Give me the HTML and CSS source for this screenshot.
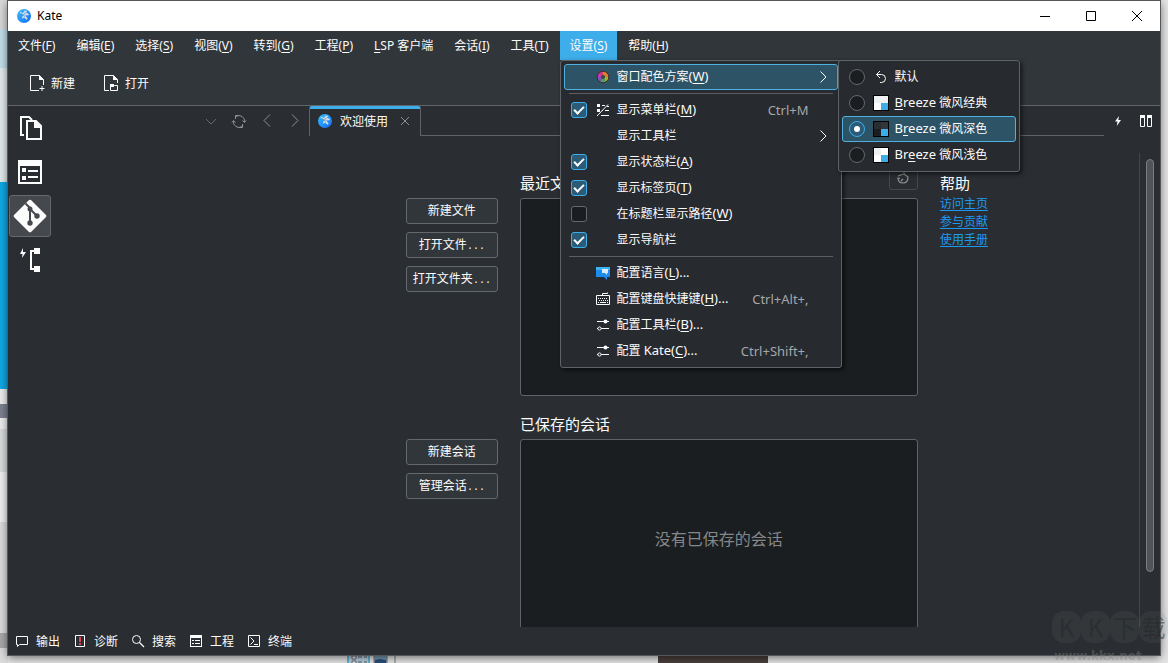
FILE: index.html
```html
<!DOCTYPE html>
<html lang="zh-CN">
<head>
<meta charset="utf-8">
<title>Kate</title>
<link rel="stylesheet" href="styles.css">
</head>
<body>
<svg class="defs" width="0" height="0" aria-hidden="true">
  <defs>
    <linearGradient id="kate-blue" x1="0" y1="0" x2="1" y2="1"><stop offset="0" stop-color="#35c3ff"/><stop offset="1" stop-color="#1467f5"/></linearGradient>
    <symbol id="kate" viewBox="0 0 16 16">
      <circle cx="8" cy="8" r="7" fill="url(#kate-blue)"/>
      <path d="M3.500 3.500l3.500 1.500 1.500-2.500 3 .3-1.500 1.700 3 1.500-.5 1.200-3.500.3 2.500 2.500-.5 2-3-2.500-1.500 1.500-.5-2 1.500-2-3.500-2z" fill="#cddbe8"/>
      <path d="M5 5.500l4 3M9.500 4.500L7.500 7" stroke="#6b93b5" stroke-width=".8" fill="none"/>
    </symbol>
    <symbol id="arrow" viewBox="0 0 16 16"><path d="M5.500 2.500L11 8l-5.500 5.500" fill="none" stroke="currentColor"/></symbol>
    <symbol id="sliders" viewBox="0 0 16 16"><path d="M2 4.500h12M6 11.500h8M2 11.500h1" fill="none" stroke="currentColor"/><circle cx="10.500" cy="4.500" r="2" fill="currentColor"/><circle cx="4.500" cy="11.500" r="1.600" fill="none" stroke="currentColor"/></symbol>
    <symbol id="bolt" viewBox="0 0 16 16"><path d="M9 3L5 8.500h2.500L6.800 13 11 7H8.300z" fill="currentColor"/></symbol>
  </defs>
</svg>

<div class="desk">
  <div class="desk-left" aria-hidden="true"></div>
  <div class="desk-bottom" aria-hidden="true">
    <svg width="50" height="12" viewBox="0 0 50 12"><path d="M1 0v12M22 0v12" stroke="#36a3cd" stroke-width="1.500"/><path d="M2 0h19v12H2z" fill="#b7cfdc"/><path d="M5 1h4v3H5zM5 6h4v3H5z" fill="#eee" stroke="#667"/><path d="M11 2h4m2 0h3M11 7h4m2 0h3" stroke="#555b60"/><path d="M27 0h13v8H27z" fill="#7697b4" stroke="#777"/><path d="M28 5l5-1 6 1v3H28z" fill="#264f79"/><path d="M48 0v12" stroke="#777"/></svg>
    <span class="desk-dark"></span>
  </div>

  <div class="window">
    <header class="titlebar">
      <svg class="icon" aria-hidden="true"><use href="#kate"/></svg>
      <span class="title">Kate</span>
      <button class="wc" aria-label="最小化"><svg width="12" height="12"><path d="M1 6.500h10" stroke="#000"/></svg></button>
      <button class="wc" aria-label="最大化"><svg width="12" height="12"><path d="M1.500 1.500h9v9h-9z" stroke="#000" fill="none"/></svg></button>
      <button class="wc" aria-label="关闭"><svg width="12" height="12"><path d="M1 1l10 10M11 1L1 11" stroke="#000"/></svg></button>
    </header>

    <nav class="menubar">
      <button class="menu">文件(<u>F</u>)</button>
      <button class="menu">编辑(<u>E</u>)</button>
      <button class="menu">选择(<u>S</u>)</button>
      <button class="menu">视图(<u>V</u>)</button>
      <button class="menu">转到(<u>G</u>)</button>
      <button class="menu">工程(<u>P</u>)</button>
      <button class="menu"><u>L</u>SP 客户端</button>
      <button class="menu">会话(<u>I</u>)</button>
      <button class="menu">工具(<u>T</u>)</button>
      <div class="menu-host">
        <button class="menu menu-open" aria-expanded="true">设置(<u>S</u>)</button>
        <div class="popup popup-settings">
          <div class="sub-host">
            <button class="item item-active">
              <svg class="icon c-icon" viewBox="0 0 16 16" aria-hidden="true"><g fill="none" stroke-width="4"><path d="M8 4a4 4 0 0 1 4 4" stroke="#d9822b"/><path d="M12 8a4 4 0 0 1-2 3.460" stroke="#9bb52e"/><path d="M10 11.460a4 4 0 0 1-4 0" stroke="#4f9e6b"/><path d="M6 11.460A4 4 0 0 1 4 8" stroke="#7f55b5"/><path d="M4 8a4 4 0 0 1 2-3.460" stroke="#c938a8"/><path d="M6 4.540A4 4 0 0 1 8 4" stroke="#e2336b"/></g><circle cx="8" cy="8" r="1.800" fill="#444"/><circle cx="8" cy="8" r="5.800" fill="none" stroke="#3b2b33"/></svg>
              <span class="c-text">窗口配色方案<span class="la">(<u>W</u>)</span></span>
              <svg class="icon c-arrow" aria-hidden="true"><use href="#arrow"/></svg>
            </button>
            <div class="popup popup-scheme">
              <label class="item"><input type="radio" name="scheme">
                <svg class="icon c-icon" viewBox="0 0 16 16"><path d="M3.500 5.500h5a3.800 3.800 0 0 1 0 8H7M7 2L3.500 5.500 7 9" fill="none" stroke="currentColor"/></svg>
                <span class="c-text">默认</span></label>
              <label class="item"><input type="radio" name="scheme">
                <svg class="icon c-icon" viewBox="0 0 16 16"><path d="M0 0h16v16H0z" fill="#000"/><path d="M1 1h14v7H1z" fill="#eff0f1"/><path d="M1 8h7v7H1z" fill="#fff"/><path d="M8 8h7v7H8z" fill="#3daee9"/></svg>
                <span class="c-text"><span class="la"><u>B</u>reeze</span> 微风经典</span></label>
              <label class="item item-active"><input type="radio" name="scheme" checked>
                <svg class="icon c-icon" viewBox="0 0 16 16"><path d="M0 0h16v16H0z" fill="#000"/><path d="M1 1h7v7H1z" fill="#2a2e32"/><path d="M8 1h7v7H8z" fill="#31363b"/><path d="M1 8h7v7H1z" fill="#1b1e20"/><path d="M8 8h7v7H8z" fill="#3daee9"/></svg>
                <span class="c-text"><span class="la">B<u>r</u>eeze</span> 微风深色</span></label>
              <label class="item"><input type="radio" name="scheme">
                <svg class="icon c-icon" viewBox="0 0 16 16"><path d="M0 0h16v16H0z" fill="#000"/><path d="M1 1h7v7H1z" fill="#eff0f1"/><path d="M8 1h7v7H8zM1 8h7v7H1z" fill="#fff"/><path d="M8 8h7v7H8z" fill="#3daee9"/></svg>
                <span class="c-text"><span class="la">Br<u>e</u>eze</span> 微风浅色</span></label>
            </div>
          </div>
          <hr class="sep">
          <label class="item"><input type="checkbox" checked>
            <svg class="icon c-icon" viewBox="0 0 16 16"><path d="M2 2h3v3H2zM2 7h3v3H2z" fill="currentColor"/><path d="M7 3.500h3M7 8.500h1M10 8.500h4M2 13.500h1M6 13.500h8M12 4.500h2M2.500 13.500L13 2.500" fill="none" stroke="currentColor"/></svg>
            <span class="c-text">显示菜单栏<span class="la">(<u>M</u>)</span></span><kbd class="key">Ctrl+M</kbd></label>
          <button class="item"><span class="c-text">显示工具栏</span><svg class="icon c-arrow" aria-hidden="true"><use href="#arrow"/></svg></button>
          <label class="item"><input type="checkbox" checked><span class="c-text">显示状态栏<span class="la">(<u>A</u>)</span></span></label>
          <label class="item"><input type="checkbox" checked><span class="c-text">显示标签页<span class="la">(<u>T</u>)</span></span></label>
          <label class="item"><input type="checkbox"><span class="c-text">在标题栏显示路径<span class="la">(<u>W</u>)</span></span></label>
          <label class="item"><input type="checkbox" checked><span class="c-text">显示导航栏</span></label>
          <hr class="sep">
          <button class="item"><svg class="icon c-icon" viewBox="0 0 16 16"><path d="M1 2h14v10h-3v3l-3-3H1z" fill="#1d8cf0"/><path d="M1 2h14v3H1z" fill="#39b5f5"/><path d="M7 4h6v4h-1v2l-2-2H7z" fill="#d8ebfb"/></svg><span class="c-text">配置语言<span class="la">(<u>L</u>)...</span></span></button>
          <button class="item"><svg class="icon c-icon" viewBox="0 0 16 16"><path d="M1.500 4.500h13v9h-13zM7.500 4.500v-2h5v-1" fill="none" stroke="currentColor"/><path d="M3 7.500h10M4 9.500h9" stroke="currentColor" stroke-dasharray="1 1"/><path d="M3 11.500h1M5 11.500h6M12 11.500h1" stroke="currentColor"/></svg><span class="c-text">配置键盘快捷键<span class="la">(<u>H</u>)...</span></span><kbd class="key">Ctrl+Alt+,</kbd></button>
          <button class="item"><svg class="icon c-icon"><use href="#sliders"/></svg><span class="c-text">配置工具栏<span class="la">(<u>B</u>)...</span></span></button>
          <button class="item"><svg class="icon c-icon"><use href="#sliders"/></svg><span class="c-text">配置 <span class="la">Kate(<u>C</u>)...</span></span><kbd class="key">Ctrl+Shift+,</kbd></button>
        </div>
      </div>
      <button class="menu">帮助(<u>H</u>)</button>
    </nav>

    <div class="toolbar">
      <button class="tool"><svg class="icon" viewBox="0 0 16 16"><path d="M10 15.500H1.500v-15h9l4 4V10M10.500 13.500h5M13 11v5" fill="none" stroke="currentColor"/><path d="M10 0l5 5h-5z" fill="currentColor"/></svg><span>新建</span></button>
      <button class="tool"><svg class="icon" viewBox="0 0 16 16"><path d="M6 15.500H1.500v-15h9l4 4V8" fill="none" stroke="currentColor"/><path d="M10 0l5 5h-5z" fill="currentColor"/><path d="M7.500 9.500h3l1 1h3v5h-7z" fill="none" stroke="currentColor"/><path d="M7 9h4v3H7z" fill="currentColor"/></svg><span>打开</span></button>
    </div>

    <div class="body">
      <aside class="sidebar">
        <button class="side" aria-label="文档"><svg width="26" height="26" viewBox="0 0 26 26"><path d="M7 20H4V2h8l3 3" fill="none" stroke="currentColor" stroke-width="2"/><path d="M10 6h9l5 5v13H10z" fill="none" stroke="currentColor" stroke-width="2"/><path d="M17 5l8 8h-8z" fill="currentColor"/></svg></button>
        <button class="side" aria-label="工程"><svg width="26" height="26" viewBox="0 0 26 26"><path d="M1 1h24v24H1zM3 7v16h20V7z" fill="currentColor" fill-rule="evenodd"/><path d="M5 9h4v4H5zM5 17h4v4H5zM11 11h10v2H11zM11 17h10v2H11z" fill="currentColor"/></svg></button>
        <button class="side side-on" aria-label="Git"><svg width="34" height="34" viewBox="0 0 34 34"><path d="M15.500 1.500a2 2 0 0 1 3 0l14 14a2 2 0 0 1 0 3l-14 14a2 2 0 0 1-3 0l-14-14a2 2 0 0 1 0-3z" fill="#fcfcfc"/><path d="M12.500 4.500L17 9v15M17 10l7 7" fill="none" stroke="#45494d" stroke-width="2"/><g fill="#45494d"><circle cx="17" cy="10" r="2.500"/><circle cx="17" cy="24" r="2.700"/><circle cx="24" cy="17" r="2.700"/></g></svg></button>
        <button class="side" aria-label="LSP"><svg width="26" height="26" viewBox="0 0 26 26"><path d="M18 4h-4v18h4" fill="none" stroke="currentColor" stroke-width="2"/><path d="M17 1h6v6h-6zM17 19h6v6h-6zM6 1L3 7h2.500L5 11l4-6H6z" fill="currentColor"/></svg></button>
      </aside>

      <main class="main">
        <div class="tabs">
          <div class="nav">
            <button class="mini dim" aria-label="列表"><svg class="icon" viewBox="0 0 16 16"><path d="M3 6l5 5 5-5" fill="none" stroke="currentColor"/></svg></button>
            <button class="mini" aria-label="刷新"><svg class="icon" viewBox="0 0 16 16"><path d="M5 3.500A5.500 5.500 0 0 1 13.500 9M11 13.500A5.500 5.500 0 0 1 2.500 8M8 2.500H4.500V6M8 14.500h3.500V11M1 9.500l1.500-2 2 2M11.500 7.500l2 2 1.500-2" fill="none" stroke="currentColor"/></svg></button>
            <button class="mini" aria-label="后退"><svg class="icon" viewBox="0 0 16 16"><path d="M11 1.500L5 7.500l6 6" fill="none" stroke="currentColor"/></svg></button>
            <button class="mini" aria-label="前进"><svg class="icon" viewBox="0 0 16 16"><path d="M5 1.500l6 6-6 6" fill="none" stroke="currentColor"/></svg></button>
          </div>
          <div class="tab">
            <svg class="icon" aria-hidden="true"><use href="#kate"/></svg>
            <span>欢迎使用</span>
            <button class="mini" aria-label="关闭标签页"><svg width="10" height="10"><path d="M1 1l8 8M9 1L1 9" stroke="currentColor"/></svg></button>
          </div>
          <div class="tab-line"></div>
          <div class="tab-tools">
            <button class="mini bright" aria-label="快速打开"><svg class="icon"><use href="#bolt"/></svg></button>
            <button class="mini bright" aria-label="分割视图"><svg class="icon" viewBox="0 0 16 16"><path d="M2 2h5v3H2zM9 2h5v3H9z" fill="currentColor"/><path d="M2.500 2.500h4v11h-4zM9.500 2.500h4v11h-4z" fill="none" stroke="currentColor"/></svg></button>
          </div>
        </div>

        <div class="view">
          <div class="welcome">
            <div class="actions row1">
              <button class="btn">新建文件</button>
              <button class="btn">打开文件<span class="dots">...</span></button>
              <button class="btn">打开文件夹<span class="dots">...</span></button>
            </div>
            <section class="recent row1">
              <div class="head"><h2>最近文档</h2><button class="clear" aria-label="清除"><svg class="icon" viewBox="0 0 16 16"><path d="M9 1v4M3 7l6-2 4 3c0 4-2 6-5 6C5 14 3 12 3 9l2 .5M6 12l2-2" fill="none" stroke="currentColor" stroke-width="1.200"/></svg></button></div>
              <div class="list"></div>
            </section>
            <section class="help row1">
              <div class="head"><h2>帮助</h2></div>
              <a href="#">访问主页</a>
              <a href="#">参与贡献</a>
              <a href="#">使用手册</a>
            </section>
            <div class="actions row2">
              <button class="btn">新建会话</button>
              <button class="btn">管理会话<span class="dots">...</span></button>
            </div>
            <section class="sessions row2">
              <div class="head"><h2>已保存的会话</h2></div>
              <div class="list">没有已保存的会话</div>
            </section>
          </div>
          <div class="scroll"><div class="thumb"></div></div>
        </div>
      </main>
    </div>

    <footer class="status">
      <button class="tool"><svg class="icon" viewBox="0 0 16 16"><path d="M2.500 3.500h11v8h-8l-2 2v-2h-1z" fill="none" stroke="currentColor"/></svg><span>输出</span></button>
      <button class="tool"><svg class="icon" viewBox="0 0 16 16"><path d="M3.500 2.500h9v11h-9z" fill="none" stroke="currentColor"/><path d="M7 4h2v5H7zM7 10h2v2H7z" fill="#da4453"/></svg><span>诊断</span></button>
      <button class="tool"><svg class="icon" viewBox="0 0 16 16"><circle cx="6.500" cy="6.500" r="4" fill="none" stroke="currentColor"/><path d="M9.500 9.500l4.500 4.500" stroke="currentColor" stroke-width="1.300"/></svg><span>搜索</span></button>
      <button class="tool"><svg class="icon" viewBox="0 0 16 16"><path d="M2 2h12v12H2zM3 5v8h10V5z" fill="currentColor" fill-rule="evenodd"/><path d="M4 7h2v1H4zM4 10h2v1H4zM7 7h5v1H7zM7 10h5v1H7z" fill="currentColor"/></svg><span>工程</span></button>
      <button class="tool"><svg class="icon" viewBox="0 0 16 16"><path d="M2.500 2.500h11v11h-11zM4.500 4.500L8 8l-3.500 3.500M8 11.500h4" fill="none" stroke="currentColor"/></svg><span>终端</span></button>
    </footer>
  </div>

  <div class="mark" aria-hidden="true">
    <div class="mark-big"><span>K</span><span>K</span><span>下</span><span>载</span></div>
    <div class="mark-url">www.kkx.net</div>
  </div>
</div>
</body>
</html>
```
FILE: styles.css
```css
*, *::before { box-sizing: border-box; }

body {
  margin: 0;
  overflow: hidden;
  font: 12px/18px "Noto Sans", "Noto Sans CJK SC", sans-serif;
  color: #fcfcfc;
}

button {
  margin: 0;
  padding: 0;
  border: 0;
  background: none;
  color: inherit;
  font: inherit;
  text-align: left;
}

svg { display: block; }
.defs { position: absolute; }
.icon { width: 16px; height: 16px; flex: none; }
u { text-underline-offset: 2px; }

/* Latin runs inside the Chinese labels */
.la { font-size: 13px; line-height: 13px; }
.dots { font-size: 10px; }

/* desktop behind the window */
.desk {
  position: relative;
  display: flex;
  height: 100vh;
  padding: 1px 8px 8px;
  background: #e4e4e4;
  overflow: hidden;
}
.desk-left {
  position: absolute;
  left: 0;
  top: 0;
  bottom: 0;
  width: 8px;
  background: linear-gradient(#d8d8d8 0 29px, #c3dfec 29px 68px, #e3eaed 68px 182px, #11a8e6 182px 389px, #eee 389px 404px, #7d8190 404px 418px, #eee 418px 429px, #d9dbdc 429px 472px, #efefef 472px 522px, #dcdcdc 522px 633px, #a9a9a9 633px 648px, #dcdcdc 648px);
}
.desk-bottom { position: absolute; left: 347px; bottom: 0; height: 8px; right: 0; overflow: hidden; }
.desk-dark { position: absolute; left: 311px; top: 0; width: 110px; height: 8px; background: #4a3f3b; }

.window {
  position: relative;
  flex: 1;
  display: flex;
  flex-direction: column;
  min-width: 0;
  background: #2a2e32;
  box-shadow: 0 0 0 1px #55585b, 0 2px 9px rgba(0, 0, 0, .6);
}

.titlebar {
  display: flex;
  align-items: center;
  height: 30px;
  padding-left: 8px;
  background: #fff;
  color: #000;
}
.title { flex: 1; margin-left: 5px; }
.wc { display: grid; place-items: center; width: 46px; height: 30px; }

/* menu bar and popups */
.menubar { display: flex; gap: 1px; height: 29px; background: #31363b; }
.menu { height: 29px; padding: 0 10px; white-space: nowrap; }
.menu-open { background: #3daee9; }
.menu-host, .sub-host { position: relative; }

.popup {
  position: absolute;
  z-index: 5;
  padding: 3px;
  border: 1px solid #5f6367;
  border-radius: 3px;
  background: #272a2f;
  box-shadow: 2px 2px 4px rgba(0, 0, 0, .6);
}
.popup-settings { left: 0; top: 100%; width: 282px; }
.popup-scheme { left: 100%; top: -4px; width: 182px; }

.item {
  display: grid;
  grid-template-columns: 24px 22px 1fr auto 22px;
  align-items: center;
  width: 100%;
  height: 26px;
  padding: 0 6px;
  border: 1px solid transparent;
  border-radius: 3px;
  white-space: nowrap;
}
.item > * { grid-row: 1; }
.item-active { border-color: #50b0df; background: #2d5366; }
.item input { grid-column: 1; }
.c-icon { grid-column: 2; }
.c-text { grid-column: 3; }
.key { grid-column: 4; font: inherit; font-size: 13px; color: #a5a7a9; }
.c-arrow { grid-column: 5; justify-self: end; }
.sep { height: 1px; margin: 3px 5px; border: 0; background: #5b5f63; }

.item input {
  appearance: none;
  display: grid;
  place-items: center;
  width: 16px;
  height: 16px;
  margin: 0;
  border: 1px solid #65696d;
  border-radius: 3px;
  background: #1b1e20;
}
.item input[type="radio"] { border-radius: 50%; }
.item input:checked { border-color: #3daee9; background: #2b5b77; }
.item input[type="checkbox"]:checked::before {
  content: "";
  width: 10px;
  height: 6px;
  margin-bottom: 2px;
  border: solid #fcfcfc;
  border-width: 0 0 2px 2px;
  transform: rotate(-45deg);
}
.item input[type="radio"]:checked::before {
  content: "";
  width: 6px;
  height: 6px;
  border-radius: 50%;
  background: #fcfcfc;
}

/* toolbars */
.toolbar {
  display: flex;
  align-items: center;
  gap: 28px;
  height: 46px;
  padding-left: 21px;
  border-bottom: 1px solid #616569;
  background: #31363b;
}
.tool { display: flex; align-items: center; gap: 6px; }
.tool span, .tab span { padding-top: 2px; }
.status { display: flex; align-items: center; gap: 12px; height: 28px; padding-left: 6px; }

.body { flex: 1; display: flex; min-height: 0; }
.sidebar { display: flex; flex-direction: column; gap: 2px; width: 44px; padding: 1px; }
.side {
  display: grid;
  place-items: center;
  width: 42px;
  height: 42px;
  border: 1px solid transparent;
  border-radius: 3px;
}
.side-on { border-color: #66696d; background: #45494d; }

.main { flex: 1; display: flex; flex-direction: column; min-width: 0; }
.tabs { display: flex; height: 30px; }
.nav { display: flex; align-items: center; justify-content: flex-end; gap: 12px; width: 257px; padding-right: 6px; }
.mini { color: #8d9093; }
.dim { color: #666a6d; }
.bright { color: #fcfcfc; }
.tab {
  display: flex;
  align-items: center;
  gap: 7px;
  width: 112px;
  padding: 0 8px 3px 7px;
  border: 1px solid #5f6367;
  border-top: 3px solid #3daee9;
  border-bottom: 0;
  border-radius: 3px 3px 0 0;
}
.tab .mini { margin-left: 5px; }
.tab-line { flex: 1; border-bottom: 1px solid #5f6367; }
.tab-tools { display: flex; align-items: center; gap: 12px; width: 56px; padding-left: 6px; }

/* welcome page */
.view { flex: 1; display: flex; min-height: 0; }
.welcome {
  flex: 1;
  display: grid;
  grid-template-columns: 5fr 92px 398px 3fr;
  grid-template-rows: auto auto;
  align-content: start;
  column-gap: 22px;
  row-gap: 13px;
  padding-top: 28px;
  overflow: hidden;
}
.row1 { grid-row: 1; }
.row2 { grid-row: 2; }
.actions { grid-column: 2; display: flex; flex-direction: column; gap: 8px; }
.recent, .sessions { grid-column: 3; }
.help { grid-column: 4; display: flex; flex-direction: column; align-items: flex-start; }
.row1.actions { padding-top: 34px; }
.row2.actions { padding-top: 30px; }
.head { display: flex; justify-content: space-between; align-items: flex-start; height: 34px; }
.row2 .head { height: 30px; }
.head h2 { margin: 8px 0 0; font-size: 15px; line-height: 22px; font-weight: 400; }
.row2 .head h2 { margin-top: 4px; }
.help .head { height: 31px; }
.clear {
  display: grid;
  place-items: center;
  width: 29px;
  height: 26px;
  border: 1px solid #45494d;
  border-radius: 3px;
  color: #8d9093;
}
.list {
  display: grid;
  place-items: center;
  height: 198px;
  padding-top: 2px;
  border: 1px solid #5f6367;
  border-radius: 3px;
  background: #1b1e20;
  color: #85888a;
  font-size: 16px;
}
.btn {
  height: 26px;
  padding-top: 2px;
  border: 1px solid #65696d;
  border-radius: 3px;
  background: #31363b;
  font-family: "Liberation Mono", "Noto Sans CJK SC", monospace;
  text-align: center;
}
.help a { color: #1d99f3; text-underline-offset: 2px; }

.scroll { width: 21px; margin-top: 17px; padding: 6px 6px 55px; border-left: 1px solid #43474a; }
.thumb { height: 100%; width: 8px; border: 1px solid #7b7e81; border-radius: 4px; background: #505457; }

/* watermark */
.mark { position: absolute; right: 0; bottom: 0; width: 116px; }
.mark-big { display: flex; font: 400 24px/32px "Noto Sans CJK SC", sans-serif; color: rgba(34, 38, 41, .5); }
.mark-big span { flex: 1 1 24px; border-radius: 12px; background: rgba(120, 120, 120, .12); text-align: center; }
.mark-url { margin-top: 6px; padding-left: 2px; font: 700 12px/14px "DejaVu Sans", sans-serif; color: rgba(130, 130, 130, .4); }
```
